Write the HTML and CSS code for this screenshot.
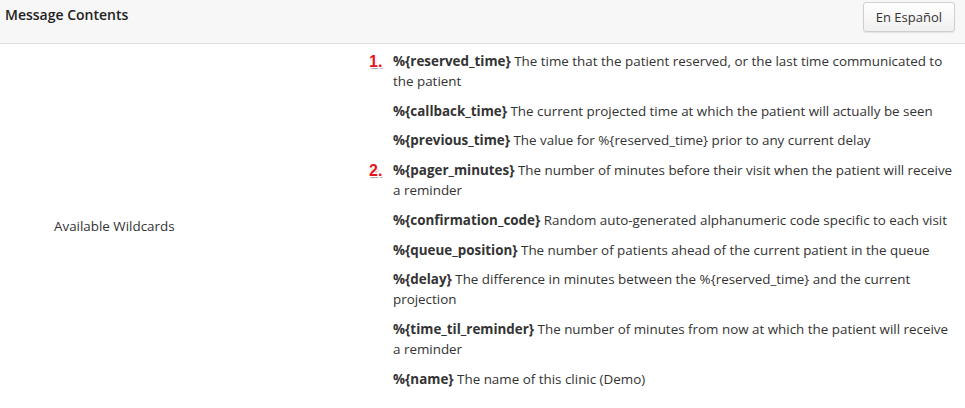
FILE: index.html
```html
<!DOCTYPE html>
<html>
<head>
<meta charset="utf-8">
<link rel="stylesheet" href="styles.css">
</head>
<body>
<div class="panel">
  <div class="panel-head">
    <div class="title">Message Contents</div>
    <button class="btn">En Español</button>
  </div>
  <div class="row">
    <div class="label">Available Wildcards</div>
    <div class="list">
      <div class="item"><span class="num">1.</span><b>%{reserved_time}</b> The time that the patient reserved, or the last time communicated to the patient</div>
      <div class="item"><b>%{callback_time}</b> The current projected time at which the patient will actually be seen</div>
      <div class="item"><b>%{previous_time}</b> The value for %{reserved_time} prior to any current delay</div>
      <div class="item"><span class="num">2.</span><b>%{pager_minutes}</b> The number of minutes before their visit when the patient will receive a reminder</div>
      <div class="item"><b>%{confirmation_code}</b> Random auto-generated alphanumeric code specific to each visit</div>
      <div class="item"><b>%{queue_position}</b> The number of patients ahead of the current patient in the queue</div>
      <div class="item"><b>%{delay}</b> The difference in minutes between the %{reserved_time} and the current projection</div>
      <div class="item"><b>%{time_til_reminder}</b> The number of minutes from now at which the patient will receive a reminder</div>
      <div class="item"><b>%{name}</b> The name of this clinic (Demo)</div>
    </div>
  </div>
</div>
</body>
</html>
```
FILE: styles.css
```css
html, body {
  margin: 0;
  padding: 0;
  background: #fff;
}
body {
  font-family: "Open Sans", "Liberation Sans", sans-serif;
  font-size: 13.4px;
  color: #333;
}
.panel-head {
  height: 43px;
  background: #f7f7f7;
  border-bottom: 1px solid #dddddd;
  display: flex;
  align-items: center;
  justify-content: space-between;
  padding: 0 10px 0 5px;
}
.title {
  font-weight: 600;
  font-size: 14px;
  color: #222;
  margin-top: -14px;
}
.btn {
  font-family: inherit;
  font-size: 13px;
  color: #333;
  background: linear-gradient(#ffffff, #f0f0f0);
  border: 1px solid #cfcfcf;
  border-radius: 3px;
  height: 30px;
  padding: 0 12px;
  margin-top: -9px;
  box-shadow: 0 1px 1px rgba(0,0,0,0.08);
}
.row {
  display: grid;
  grid-template-columns: 393px 1fr;
  padding-top: 8px;
}
.label {
  display: flex;
  align-items: center;
  padding-left: 54px;
  line-height: 20px;
}
.list {
  padding-right: 10px;
}
.item {
  line-height: 19.8px;
  margin-bottom: 10px;
  position: relative;
}
.item b {
  font-weight: 700;
}
.num {
  position: absolute;
  left: -24px;
  top: 0;
  color: #e8141b;
  font-weight: 800;
  font-size: 16px;
  font-family: "Liberation Sans", sans-serif;
  text-shadow: 1px 1px 0 #fff, -1px -1px 0 #fff, 1px -1px 0 #fff, -1px 1px 0 #fff, 1px 2px 1px rgba(0,0,0,0.35);
}
```
